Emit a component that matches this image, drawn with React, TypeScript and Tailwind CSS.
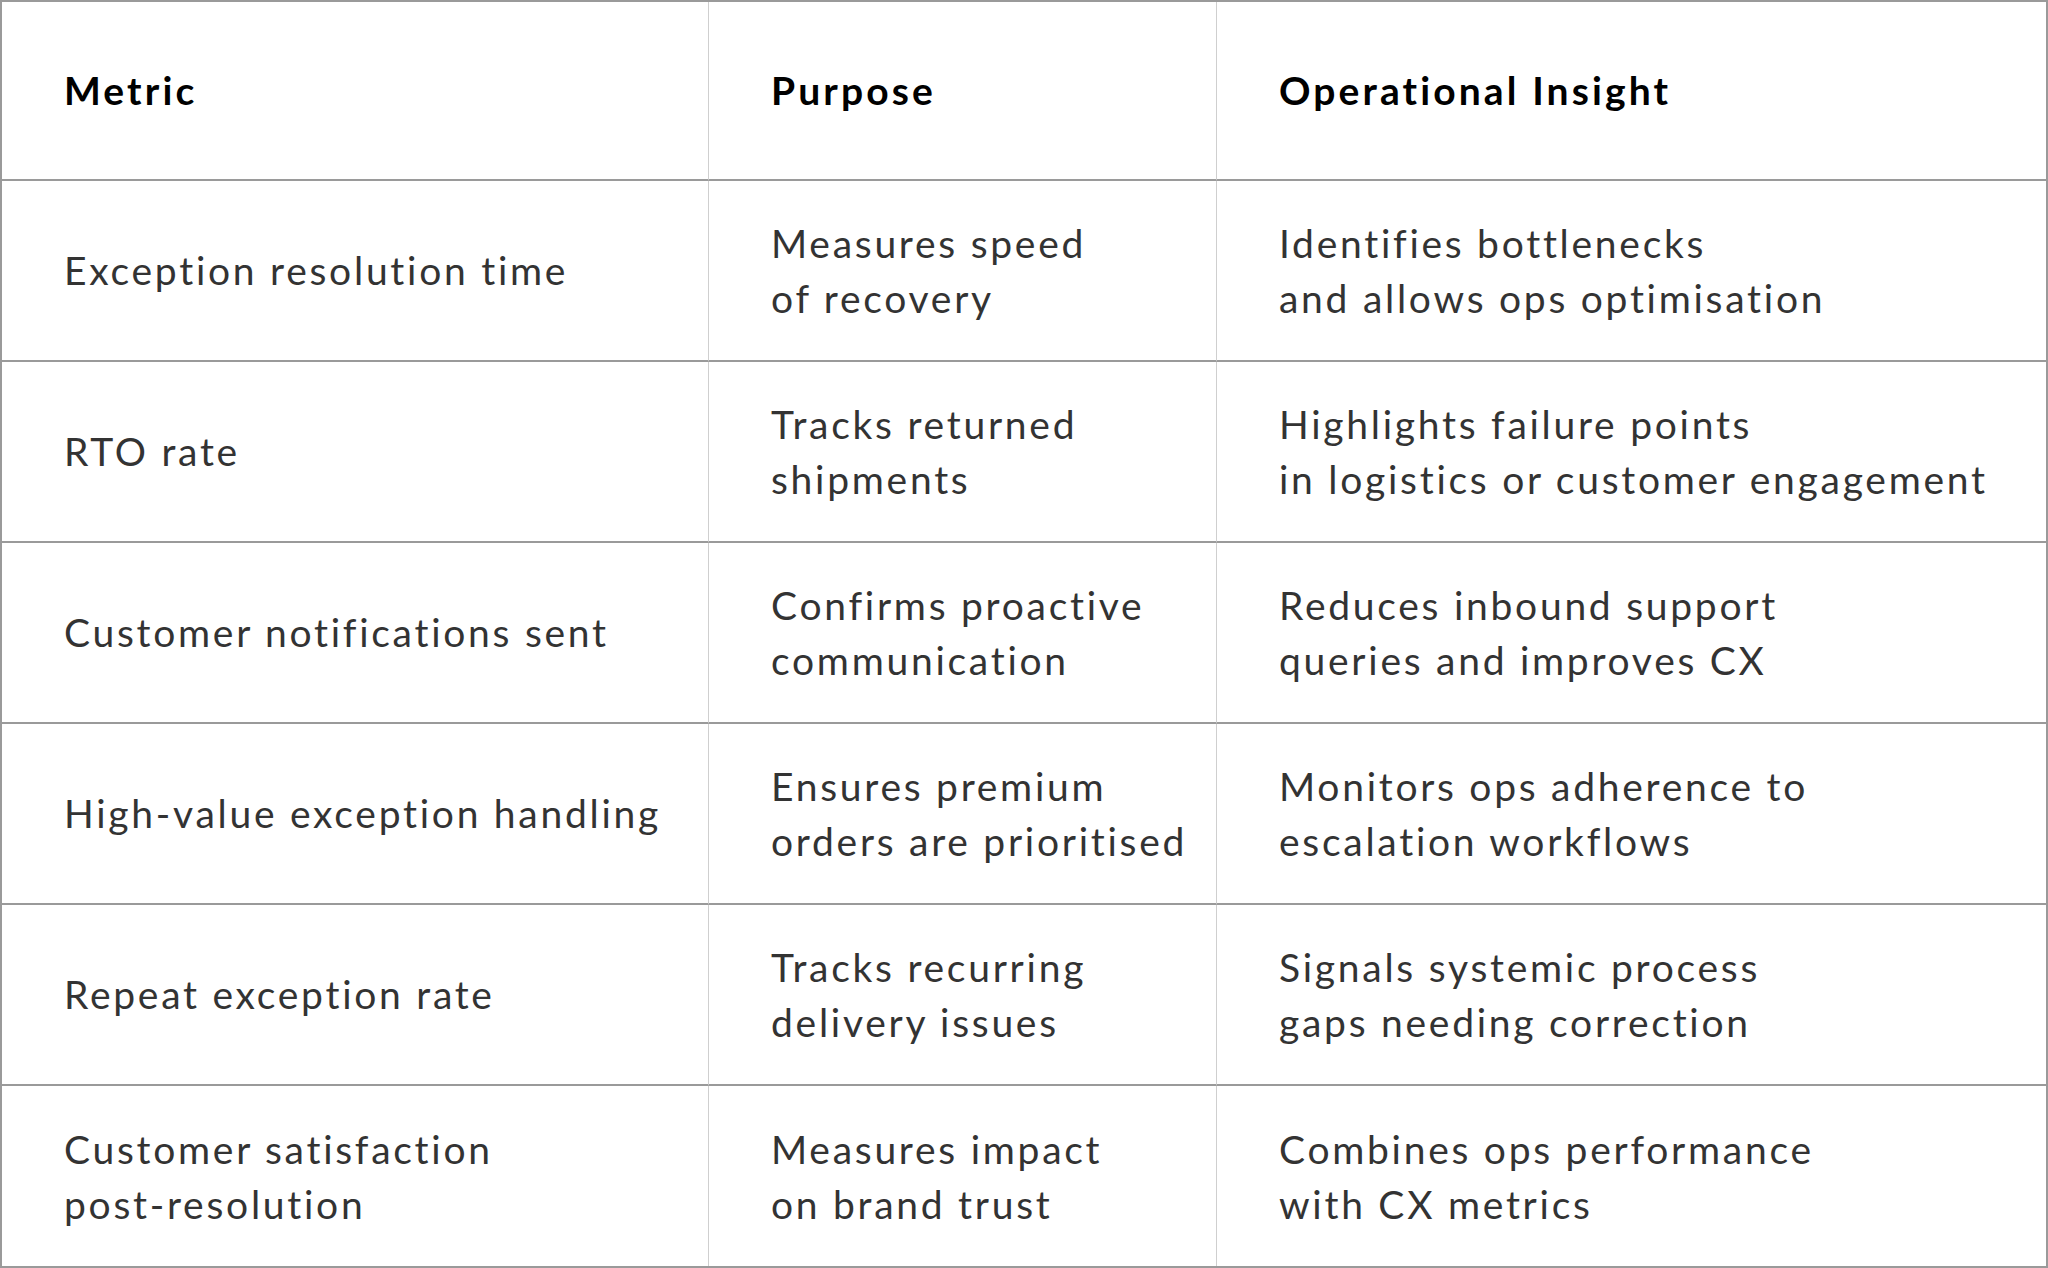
const rows: [string, string, string][] = [
  ["Exception resolution time", "Measures speed\nof recovery", "Identifies bottlenecks\nand allows ops optimisation"],
  ["RTO rate", "Tracks returned\nshipments", "Highlights failure points\nin logistics or customer engagement"],
  ["Customer notifications sent", "Confirms proactive\ncommunication", "Reduces inbound support\nqueries and improves CX"],
  ["High-value exception handling", "Ensures premium\norders are prioritised", "Monitors ops adherence to\nescalation workflows"],
  ["Repeat exception rate", "Tracks recurring\ndelivery issues", "Signals systemic process\ngaps needing correction"],
  ["Customer satisfaction\npost-resolution", "Measures impact\non brand trust", "Combines ops performance\nwith CX metrics"],
];

const header: [string, string, string] = ["Metric", "Purpose", "Operational Insight"];

export default function App() {
  const all = [header, ...rows];
  return (
    <div
      className="w-[2048px] h-[1268px] bg-white overflow-hidden border-2 border-[#9a9a9a] text-[39px]"
      style={{ fontFamily: "Lato, 'Noto Sans', sans-serif" }}
    >
      <div className="grid grid-cols-[707px_508px_1fr] grid-rows-[179px_repeat(6,181px)] h-full">
        {all.map((r, i) =>
          r.map((t, j) => (
            <div
              key={i + "-" + j}
              className={
                "flex items-center pl-[62px] pr-2 whitespace-pre-line leading-[55px] " +
                (i < all.length - 1 ? "border-b-2 border-b-[#9a9a9a] " : "") +
                (j < 2 ? "border-r border-r-[#cfcfcf] " : "") +
                (i === 0
                  ? "font-bold text-black tracking-[0.08em]"
                  : "text-[#333333] tracking-[0.07em]")
              }
            >
              {t}
            </div>
          ))
        )}
      </div>
    </div>
  );
}
